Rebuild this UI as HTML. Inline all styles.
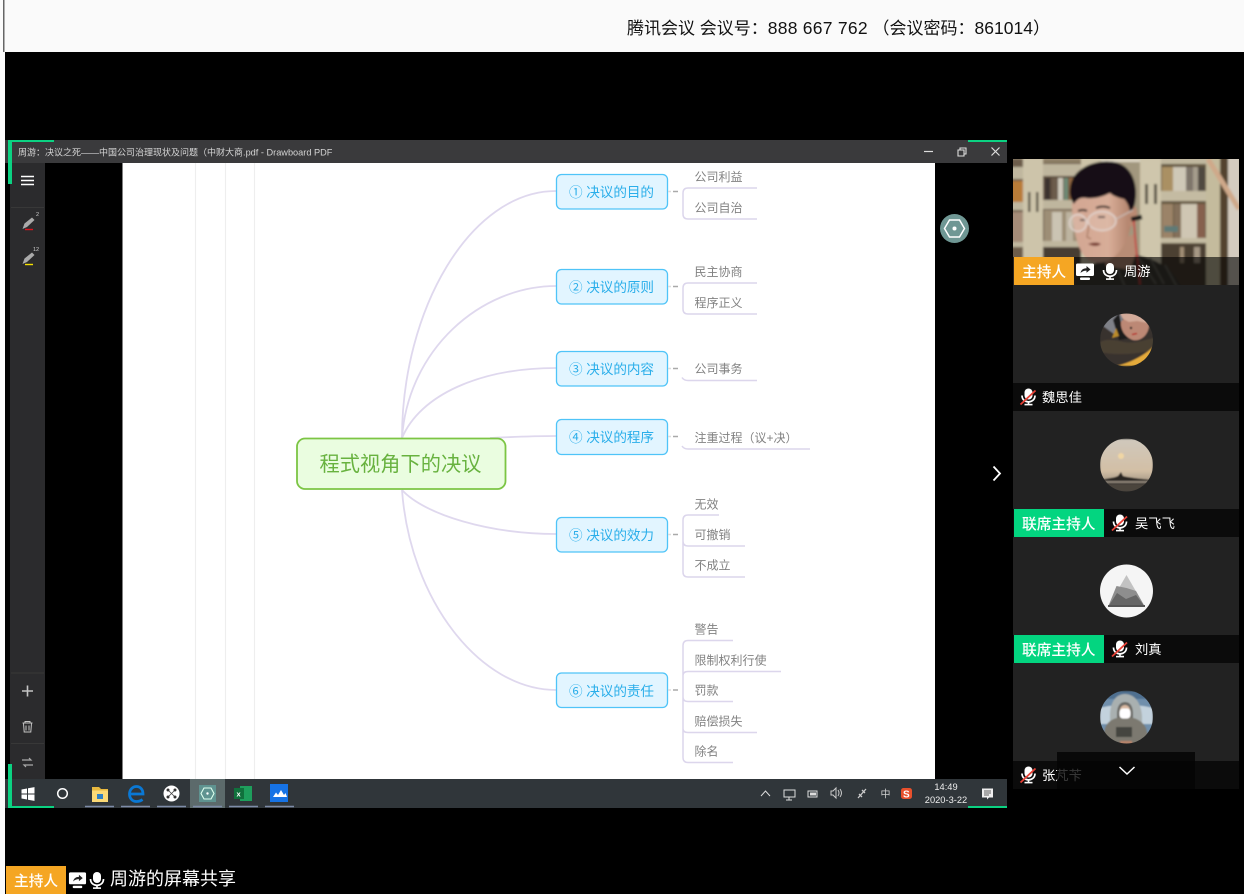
<!DOCTYPE html>
<html lang="zh"><head><meta charset="utf-8"><title>腾讯会议</title>
<style>
html,body{margin:0;padding:0;background:#000;width:1244px;height:894px;overflow:hidden}
svg{display:block;position:absolute;left:0;top:0}
text{font-family:"Liberation Sans","Noto Sans CJK SC",sans-serif}
.c{font-size:12px;fill:#828282}
.n{font-size:13.6px;fill:#2aaeea}
.w{font-size:13.3px;fill:#fff}
.l{font-size:14.7px;fill:#fff;font-weight:500}
.b{fill:#e2f5ff;stroke:#4fc4f8;stroke-width:1.3}
.cu{fill:none;stroke:#dfd8ee;stroke-width:1.8}
.br{fill:none;stroke:#dcd6ec;stroke-width:1.5}
.d{stroke:#aaa;stroke-width:1.5}
.pl{stroke:#eeeeee;stroke-width:1.2}
</style></head><body>
<svg width="1244" height="894" viewBox="0 0 1244 894" xmlns="http://www.w3.org/2000/svg">
<defs>
<symbol id="mic" viewBox="0 0 18 18"><rect x="5" y="0.5" width="8" height="11" rx="4" fill="#fff"/><path d="M2.5 7.5c0 8.500 13 8.500 13 0" fill="none" stroke="#fff" stroke-width="1.700"/><rect x="8.200" y="13" width="1.600" height="3.500" fill="#fff"/><rect x="5" y="15.800" width="8" height="1.600" fill="#fff"/></symbol>
<symbol id="mute" viewBox="0 0 18 18"><use href="#mic" width="18" height="18"/><path d="M1 16.500L16 2.500" stroke="#e84035" stroke-width="1.800"/></symbol>
<symbol id="share" viewBox="0 0 20 20"><rect x="1" y="1.500" width="18" height="12.500" rx="1.500" fill="#fff"/><rect x="5" y="15.500" width="10" height="2.500" rx="1" fill="#fff"/><path d="M5.500 11c.5-3 2.500-4.800 6-4.800V4l4 3.500-4 3.200V8.600C9 8.600 7 9.400 5.500 11z" fill="#222"/></symbol>
<clipPath id="vid"><rect x="1013" y="159" width="226" height="126"/></clipPath>
<clipPath id="a1"><circle cx="1126.500" cy="340" r="26.500"/></clipPath>
<clipPath id="a2"><circle cx="1126.500" cy="465" r="26.500"/></clipPath>
<clipPath id="a4"><circle cx="1126.500" cy="717" r="26.500"/></clipPath>
<filter id="bl" x="-5%" y="-5%" width="110%" height="110%"><feGaussianBlur stdDeviation="1.100"/></filter>
<filter id="bl2"><feGaussianBlur stdDeviation="0.700"/></filter>
<linearGradient id="sky" x1="0" y1="0" x2="0" y2="1"><stop offset="0" stop-color="#cfc8bc"/><stop offset=".6" stop-color="#d3bfa5"/><stop offset=".8" stop-color="#a89a88"/></linearGradient>
<linearGradient id="face" x1="0" y1="0" x2="1" y2="0"><stop offset="0" stop-color="#d2a692"/><stop offset=".6" stop-color="#d8ad98"/><stop offset="1" stop-color="#ad7d66"/></linearGradient>
</defs>

<!-- page frame -->
<rect x="0" y="0" width="1244" height="894" fill="#000"/>
<rect x="0" y="0" width="5" height="894" fill="#fbfbfb"/>
<rect x="3" y="0" width="1.500" height="52" fill="#666"/>
<rect x="5" y="0" width="1239" height="52" fill="#fafafa"/>
<text x="627" y="34" font-size="17" fill="#111">腾讯会议 会议号：<tspan font-size="17.500" letter-spacing=".25">888 667 762</tspan> （会议密码：<tspan font-size="17.500">861014</tspan>）</text>

<!-- window -->
<rect x="5" y="140" width="1002" height="23" fill="#3a3a3c"/>
<text x="18" y="155.500" font-size="9" fill="#d4d4d4">周游：决议之死——中国公司治理现状及问题（中财大商<tspan font-size="9.200">.pdf - Drawboard PDF</tspan></text>
<path d="M924 151.500h9" stroke="#ddd" stroke-width="1.200"/>
<path d="M958 150h6v6h-6zM960 150v-2h6v6h-2" fill="none" stroke="#ddd" stroke-width="1.100"/>
<path d="M991.500 147.500l8 8M999.500 147.500l-8 8" stroke="#ddd" stroke-width="1.200"/>

<!-- sidebar -->
<rect x="10" y="163" width="35" height="616" fill="#2b2b2d"/>
<path d="M21 176.500h13M21 180.500h13M21 184.500h13" stroke="#fff" stroke-width="1.600"/>
<path d="M11 207.500h33M11 673h33M11 743.500h33" stroke="#383838" stroke-width="1"/>
<path d="M22.500 229l2-5.500 7.500-6 2.500 2.500-7.500 7z" fill="#aaa"/><path d="M25 229.500h8" stroke="#d8141e" stroke-width="1.400"/>
<text x="36" y="216" font-size="5.500" fill="#ccc">2</text>
<path d="M22.500 264l2-5.500 7.500-6 2.500 2.500-7.500 7z" fill="#aaa"/><path d="M25 264.500h8" stroke="#f5e000" stroke-width="1.400"/>
<text x="33" y="251" font-size="5.500" fill="#ccc">12</text>
<path d="M27.500 685.500v11M22 691h11" stroke="#c4c4c4" stroke-width="1.600"/>
<path d="M22.500 723h10M25 723v-1.500h5v1.500M23.500 723.500l.7 8.500h6.600l.7-8.500M26 725.500v5M29 725.500v5" fill="none" stroke="#c4c4c4" stroke-width="1"/>
<path d="M22 760h9l-2-2M33 765h-9l2 2" fill="none" stroke="#aaa" stroke-width="1.200"/>

<!-- pdf page -->
<rect x="122.500" y="163" width="812.500" height="616" fill="#fff"/>
<path class="pl" d="M195.500 163v616M225.500 163v616M254.500 163v616"/>

<!-- curves -->
<path class="cu" d="M402 438C402 310 470 191 556 191"/>
<path class="cu" d="M402 438C408 350 480 286 556 286"/>
<path class="cu" d="M402 438C420 395 480 368 556 368"/>
<path class="cu" d="M490 438C510 437 530 436 556 436"/>
<path class="cu" d="M402 490C425 515 490 534 556 534"/>
<path class="cu" d="M402 490C410 600 480 690 556 690"/>

<!-- root -->
<rect x="297" y="438.500" width="208.500" height="50.500" rx="8" fill="#eafde0" stroke="#7cc544" stroke-width="1.800"/>
<text x="319.500" y="471" font-size="20.200" fill="#68b23f" textLength="162">程式视角下的决议</text>

<!-- nodes -->
<rect class="b" x="556.500" y="174.500" width="111" height="34.500" rx="5"/>
<text class="n" x="569" y="197" textLength="85">① 决议的目的</text>
<rect class="b" x="556.500" y="269.500" width="111" height="34.500" rx="5"/>
<text class="n" x="569" y="292" textLength="85">② 决议的原则</text>
<rect class="b" x="556.500" y="351.500" width="111" height="34.500" rx="5"/>
<text class="n" x="569" y="374" textLength="85">③ 决议的内容</text>
<rect class="b" x="556.500" y="419.500" width="111" height="35" rx="5"/>
<text class="n" x="569" y="442" textLength="85">④ 决议的程序</text>
<rect class="b" x="556.500" y="517.500" width="111" height="34.500" rx="5"/>
<text class="n" x="569" y="540" textLength="85">⑤ 决议的效力</text>
<rect class="b" x="556.500" y="673" width="111" height="34.500" rx="5"/>
<text class="n" x="569" y="696" textLength="85">⑥ 决议的责任</text>

<!-- dashes -->
<path d="M668 191.500h3M668 286.500h3M668 368.500h3M668 436.500h3M668 534.500h3M668 690h3" stroke="#ddd" stroke-width="1.500"/>
<path class="d" d="M673 191.500h5M673 286.500h5M673 368.500h5M673 436.500h5M673 534.500h5M673 690h5"/>

<!-- branch lines -->
<path class="br" d="M757 188H688q-5 0-5 5v21q0 5 5 5h69"/>
<path class="br" d="M757 283H688q-5 0-5 5v21q0 5 5 5h69"/>
<path class="br" d="M757 380.500H688q-4 0-6-3"/>
<path class="br" d="M810 449H688q-4 0-6-3"/>
<path class="br" d="M719 515H688q-5 0-5 5v52q0 5 5 5h57M683 541q0 5 5 5h57"/>
<path class="br" d="M733 640.500H688q-5 0-5 5v112q0 5 5 5h45M781 671.500H688q-5 0-5 4M683 697q0 4.500 5 4.500h45M757 732.500H688q-5 0-5-4"/>

<!-- child labels -->
<text class="c" x="694.500" y="181">公司利益</text>
<text class="c" x="694.500" y="212">公司自治</text>
<text class="c" x="694.500" y="276">民主协商</text>
<text class="c" x="694.500" y="307">程序正义</text>
<text class="c" x="694.500" y="373">公司事务</text>
<text class="c" x="694.500" y="442">注重过程（议+决）</text>
<text class="c" x="694.500" y="508.500">无效</text>
<text class="c" x="694.500" y="539">可撤销</text>
<text class="c" x="694.500" y="569.500">不成立</text>
<text class="c" x="694.500" y="633.500">警告</text>
<text class="c" x="694.500" y="664.500">限制权利行使</text>
<text class="c" x="694.500" y="694.500">罚款</text>
<text class="c" x="694.500" y="725.500">赔偿损失</text>
<text class="c" x="694.500" y="755.500">除名</text>

<!-- floating hex -->
<circle cx="954.500" cy="228.500" r="14.500" fill="#6f9794"/>
<path d="M949.500 220h10l5 8.500-5 8.500h-10l-5-8.500z" fill="none" stroke="#fff" stroke-width="1.500"/>
<circle cx="954.500" cy="228.500" r="2" fill="#fff"/>

<!-- taskbar -->
<rect x="5" y="779" width="1002" height="29" fill="#30363a"/>
<rect x="190" y="779" width="35" height="29" fill="#5c6a6b"/>
<path d="M21.500 789.500l5.500-1v5h-5.500zM28 788.300l6.500-1.200v6.400H28zM21.500 794.500H27v5l-5.500-1zM28 794.500h6.500v6.400l-6.500-1.200z" fill="#fff"/>
<circle cx="62.500" cy="793.500" r="4.800" fill="none" stroke="#fff" stroke-width="1.500"/>
<path d="M92 787h7l2 2h7v13H92z" fill="#e9b93f"/><rect x="92" y="790.500" width="16" height="11.500" fill="#fbd976"/><rect x="97" y="794" width="6" height="5" fill="#2f80c4"/>
<path d="M130.500 794h12.500c0-4.500-2.800-7.500-6.500-7.500-4 0-7 3.300-7 7.500 0 4.500 3 7.500 7 7.500 2.300 0 4.300-.6 6-2" fill="none" stroke="#0a78d4" stroke-width="2.800"/>
<circle cx="171.500" cy="793.500" r="8" fill="#fff"/><path d="M168 790l7 7M175 790l-7 7" stroke="#444" stroke-width=".8"/><circle cx="168" cy="790" r="1.500" fill="#333"/><circle cx="175" cy="790" r="1.500" fill="#333"/><circle cx="168" cy="797" r="1.500" fill="#333"/><circle cx="175" cy="797" r="1.500" fill="#333"/>
<rect x="199" y="785" width="17" height="17" fill="#5f9390"/><path d="M204 788h7l3 5.500-3 5.500h-7l-3-5.500z" fill="none" stroke="#dfe" stroke-width="1.100"/><circle cx="207.500" cy="793.500" r="1.200" fill="#fff"/>
<rect x="240" y="786" width="12" height="15" fill="#1e9e5c"/><rect x="234" y="788" width="10" height="11" fill="#10703c"/><text x="236.500" y="796.500" font-size="7.500" font-weight="bold" fill="#fff">x</text>
<rect x="270" y="784" width="18" height="18" fill="#1673e6"/><path d="M273 797l3-4.500 2 2.500 3-5 3 5 1.500-2 1.500 4z" fill="#fff"/>
<path d="M85 806.500h29M121 806.500h29M157 806.500h29M193 806.500h29M229 806.500h29M265 806.500h29" stroke="#7e8ca8" stroke-width="1.500"/>

<!-- tray -->
<path d="M761 796l4.500-5 4.500 5" fill="none" stroke="#ddd" stroke-width="1"/>
<path d="M784 790h11v7h-11zM789 797v3M786 800h6" fill="none" stroke="#ddd" stroke-width="1"/>
<rect x="808" y="791" width="9" height="6" fill="none" stroke="#ddd"/><rect x="810" y="792.500" width="6" height="3" fill="#ddd"/>
<path d="M831 791h2l3-3v10l-3-3h-2zM838 790q2 3 0 6M840 789q3 4 0 8" fill="none" stroke="#ccc" stroke-width="1"/>
<path d="M858 798l8-9M859 794l3 3M862 790l3 3" fill="none" stroke="#ccc" stroke-width="1.300"/>
<text x="880.500" y="797.500" font-size="10" fill="#cfcfcf">中</text>
<rect x="901" y="788" width="11" height="11" rx="2.500" fill="#e8502c"/><text x="903" y="797.500" font-size="10" font-weight="bold" fill="#fff">S</text>
<text x="946" y="790" font-size="9.300" fill="#eee" text-anchor="middle">14:49</text>
<text x="946" y="803" font-size="9.300" fill="#eee" text-anchor="middle">2020-3-22</text>
<path d="M982 788.500h11v9h-4l-2 2v-2h-5z" fill="#eee"/><path d="M984 791h7M984 793h7M984 795h5" stroke="#333" stroke-width=".8"/>

<!-- green corners -->
<path d="M8 140h46v2H12v42H8z" fill="#0bd282"/>
<path d="M8 764h4v42h42v2H8z" fill="#0bd282"/>
<rect x="968" y="140" width="39" height="2" fill="#0bd282"/>
<rect x="968" y="806" width="39" height="2" fill="#0bd282"/>

<!-- next chevron -->
<path d="M993.500 466.500l6.500 7-6.500 7" fill="none" stroke="#fff" stroke-width="1.800"/>

<!-- bottom sharing label -->
<rect x="6" y="866" width="60" height="28" fill="#f5a623"/>
<text x="14" y="886" class="l">主持人</text>
<use href="#share" x="68" y="871" width="19" height="19"/>
<use href="#mic" x="88" y="871" width="18" height="19"/>
<text x="110" y="885" font-size="18" fill="#fff">周游的屏幕共享</text>

<!-- host video -->
<g clip-path="url(#vid)">
<rect x="1013" y="159" width="226" height="126" fill="#a89d84"/>
<g filter="url(#bl)">
<rect x="1010" y="159" width="13" height="130" fill="#6d5d4b"/>
<rect x="1010" y="167" width="13" height="12" fill="#c0b79f"/>
<rect x="1010" y="181" width="13" height="21" fill="#b97b39"/>
<rect x="1010" y="202" width="13" height="8" fill="#c0b79f"/>
<rect x="1010" y="212" width="13" height="30" fill="#a58c78"/>
<rect x="1010" y="242" width="13" height="5" fill="#c0b79f"/>
<rect x="1023" y="155" width="20" height="134" fill="#cdc4aa"/>
<rect x="1028" y="192" width="2.500" height="20" fill="#5d5646"/><rect x="1036" y="192" width="2.500" height="20" fill="#5d5646"/>
<rect x="1043" y="159" width="38" height="130" fill="#5e5040"/>
<rect x="1043" y="159" width="38" height="4" fill="#8d7e65"/>
<rect x="1043" y="164" width="38" height="12" fill="#bfb69e"/>
<rect x="1045" y="178" width="5" height="22" fill="#3a332f"/><rect x="1052" y="178" width="5" height="22" fill="#6c5b4c"/><rect x="1058" y="178" width="5" height="22" fill="#cfc9bb"/><rect x="1064" y="178" width="4" height="22" fill="#6e8a75"/><rect x="1069" y="178" width="8" height="22" fill="#976b42"/>
<rect x="1043" y="200" width="38" height="9" fill="#bfb69e"/>
<rect x="1044" y="210" width="36" height="31" fill="#9d8e76"/><rect x="1052" y="212" width="10" height="29" fill="#cbc4b3"/><rect x="1066" y="212" width="7" height="29" fill="#bdb4a0"/>
<rect x="1043" y="241" width="38" height="6" fill="#bfb69e"/>
<rect x="1043" y="247" width="38" height="40" fill="#463c32"/>
<rect x="1081" y="155" width="20" height="134" fill="#ccc3a8"/>
<rect x="1101" y="159" width="40" height="130" fill="#a2977e"/>
<rect x="1101" y="159" width="40" height="3" fill="#ddd6c4"/>
<rect x="1140" y="155" width="21" height="134" fill="#cfc6ac"/>
<rect x="1145" y="184" width="3" height="20" fill="#5a5444"/><rect x="1154" y="184" width="3" height="20" fill="#5a5444"/>
<rect x="1161" y="159" width="45" height="130" fill="#64563f"/>
<rect x="1161" y="155" width="45" height="9" fill="#c0b79f"/>
<rect x="1162" y="167" width="11" height="24" fill="#aa9063"/><rect x="1173" y="167" width="13" height="24" fill="#cfc8b7"/><rect x="1186" y="167" width="7" height="24" fill="#7e756a"/><rect x="1193" y="167" width="5" height="24" fill="#a69d8d"/><rect x="1198" y="167" width="7" height="24" fill="#4f4840"/>
<rect x="1161" y="191" width="45" height="10" fill="#c4bba2"/>
<rect x="1162" y="204" width="11" height="34" fill="#9b8368"/><rect x="1174" y="204" width="7" height="34" fill="#84705a"/><rect x="1181" y="204" width="16" height="34" fill="#cfc6b3"/><rect x="1197" y="204" width="8" height="34" fill="#86604e"/>
<rect x="1164" y="226" width="14" height="6" fill="#5e7a76"/>
<rect x="1161" y="238" width="45" height="5" fill="#c4bba2"/>
<rect x="1161" y="244" width="45" height="45" fill="#4c4032"/>
<rect x="1180" y="247" width="4" height="16" fill="#a38f76"/><rect x="1194" y="247" width="6" height="16" fill="#a69885"/>
<rect x="1206" y="155" width="14" height="134" fill="#c4bb9d"/>
<rect x="1220" y="155" width="9" height="134" fill="#52432f"/>
<rect x="1228" y="155" width="12" height="134" fill="#d4ccc0"/>
<path d="M1208 159l31 50" stroke="#cfa98a" stroke-width="5"/>
<path d="M1075 290c4-16 16-26 28-30l32-6c14 5 36 8 48 36z" fill="#3f3c36"/>
<path d="M1136 254l20 30M1150 258l14 26M1115 262l10 25M1165 265l12 22" stroke="#646158" stroke-width="2"/>
<path d="M1100 246l6 20 24 4 6-16-2-20z" fill="#b88c74"/>
<path d="M1072 204c0-8 4-14 12-14h38c6 0 11 8 11 16 0 22-7 42-19 51-9 7-21 8-28 1-9-9-14-32-14-54z" fill="url(#face)"/>
<path d="M1130 207c5-3 8 1 7 9-1 8-5 12-8 10z" fill="#b98a72"/>
<path d="M1070 195c-1-14 5-22 13-27 12-8 32-9 41-2 10 7 14 22 11 37-1 5-3 8-5 9-1-6-3-10-6-13-5-1-11-3-14-6-8 4-16 6-24 5-5-1-9 1-12 6-2-3-3-5-4-9z" fill="#121115"/>
<path d="M1078 211q5-2 9 0M1096 208q7-3 14 0" stroke="#2a2420" stroke-width="2" fill="none"/>
<path d="M1080 220h5M1098 217h7" stroke="#2f2320" stroke-width="1.800"/>
<ellipse cx="1078" cy="223" rx="8.500" ry="8.500" fill="#efe0d8" fill-opacity=".22" stroke="#e2d6d0" stroke-width="1.400"/>
<ellipse cx="1102" cy="221" rx="14" ry="9.500" fill="#efe0d8" fill-opacity=".22" stroke="#e2d6d0" stroke-width="1.400"/>
<path d="M1116 219l17-9" stroke="#c8b8b0" stroke-width="1.300"/>
<path d="M1089 225l-2 12 4 2" stroke="#a97b65" stroke-width="1.300" fill="none"/>
<path d="M1088 244q8-3 13 0q-5 4-13 0z" fill="#7a3f36"/>
<rect x="1131" y="216" width="11" height="4.500" fill="#141414" transform="rotate(-12 1136 218)"/>
<path d="M1134 221c1 20 4 42 6 64" stroke="#c43d3d" stroke-width="1.700" fill="none"/>
</g>
<rect x="1013" y="257" width="226" height="28" fill="#000" opacity=".6"/>
</g>
<rect x="1014" y="257" width="60" height="28" fill="#f5a623"/>
<text class="l" x="1022" y="277">主持人</text>
<use href="#share" x="1075" y="262" width="20" height="20"/>
<use href="#mic" x="1101" y="262" width="18" height="19"/>
<text class="w" x="1124" y="276">周游</text>

<!-- tiles -->
<rect x="1013" y="285" width="226" height="504" fill="#222"/>
<rect x="1013" y="383" width="226" height="28" fill="#0b0b0b"/>
<rect x="1013" y="509" width="226" height="28" fill="#0b0b0b"/>
<rect x="1013" y="635" width="226" height="28" fill="#0b0b0b"/>
<rect x="1013" y="761" width="226" height="28" fill="#0b0b0b"/>

<!-- avatar 1 -->
<g clip-path="url(#a1)"><g filter="url(#bl2)">
<rect x="1100" y="313" width="53" height="53" fill="#38322f"/>
<path d="M1103 326l10-12 9 0 2 16-10 4z" fill="#7f8188"/>
<path d="M1113 320l6-7 4 20 8 5-12 2z" fill="#1d1a1a"/>
<path d="M1121 322c3-5 14-7 22-3l6 6c0 9-8 17-16 15-7-2-13-10-12-18z" fill="#bc8874"/>
<path d="M1120 313h16c6 0 12 4 17 11l-16-3-8 1-6-3z" fill="#d3ab9a"/>
<circle cx="1131" cy="328" r="1.200" fill="#222"/><path d="M1132 334.500l5-1" stroke="#b8322e" stroke-width="1.500"/>
<path d="M1100 342c8-4 16-2 24 0 10 2 20-2 30-4v12c-16 4-38 6-54 2z" fill="#4a3f32"/>
<path d="M1116 366c10-2 26-8 38-20v20z" fill="#e4aa3a"/>
<path d="M1116 328l3 8-7 2z" fill="#b98a2a"/>
</g></g>

<!-- avatar 2 -->
<g clip-path="url(#a2)"><g filter="url(#bl2)">
<rect x="1100" y="439" width="53" height="53" fill="url(#sky)"/>
<circle cx="1121" cy="456" r="3" fill="#f0d6a4"/>
<path d="M1100 480c8-2 14-2 18-4l3-4 2 4c8 2 20 3 30 4v12h-53z" fill="#2c2722"/>
<rect x="1100" y="481" width="53" height="2" fill="#8d8478"/>
<rect x="1100" y="484" width="53" height="8" fill="#4c453d"/>
</g></g>

<!-- avatar 3 -->
<circle cx="1126.500" cy="591" r="26.500" fill="#f5f5f5"/>
<path d="M1126.500 575l-18.500 32h37z" fill="#c2c2c2"/>
<path d="M1126.500 588l-10 -2-8.500 21h37l-9-16z" fill="#8e8e8e"/>
<path d="M1108 607l9-14 9 6 10-4 9 12z" fill="#666"/>
<rect x="1108" y="605" width="37" height="2" fill="#555"/>

<!-- avatar 4 -->
<g clip-path="url(#a4)"><g filter="url(#bl2)">
<rect x="1100" y="691" width="53" height="53" fill="#6f8fac"/>
<rect x="1100" y="691" width="53" height="8" fill="#4f7090"/>
<path d="M1100 708c12-4 40-4 53 0v16h-53z" fill="#c3d2dd"/>
<path d="M1110 716c0-14 6-22 15-22s16 8 17 22v10h-32z" fill="#a9b0b0"/>
<path d="M1117 714c0-8 3-12 8-12s8 4 8 12v6h-16z" fill="#6a6a66"/>
<path d="M1105 728c3-8 11-11 20-11s17 3 21 11l5 18h-50z" fill="#7c7970"/>
<circle cx="1125" cy="710" r="5" fill="#d8b8a0"/>
<rect x="1119.500" y="708.500" width="11" height="10" rx="3.500" fill="#fff"/>
<rect x="1116" y="727" width="16" height="10" fill="#45453f"/>
<rect x="1120" y="741" width="12" height="3" fill="#b8836a"/>
</g></g>

<!-- name tags -->
<use href="#mute" x="1019.500" y="388" width="18" height="18"/>
<text class="w" x="1042" y="402">魏思佳</text>

<rect x="1014" y="509" width="90" height="28" fill="#03d580"/>
<text class="l" x="1022" y="529">联席主持人</text>
<use href="#mute" x="1111" y="514" width="18" height="18"/>
<text class="w" x="1135" y="528">吴飞飞</text>

<rect x="1014" y="635" width="90" height="28" fill="#03d580"/>
<text class="l" x="1022" y="655">联席主持人</text>
<use href="#mute" x="1111" y="640" width="18" height="18"/>
<text class="w" x="1135" y="654">刘真</text>

<use href="#mute" x="1019.500" y="766" width="18" height="18"/>
<text class="w" x="1042" y="780">张芃苄</text>

<rect x="1057" y="752" width="138" height="37" fill="#040404" opacity=".8"/>
<path d="M1119.500 767l7.500 7 7.500-7" fill="none" stroke="#fff" stroke-width="1.500"/>
</svg>
</body></html>
